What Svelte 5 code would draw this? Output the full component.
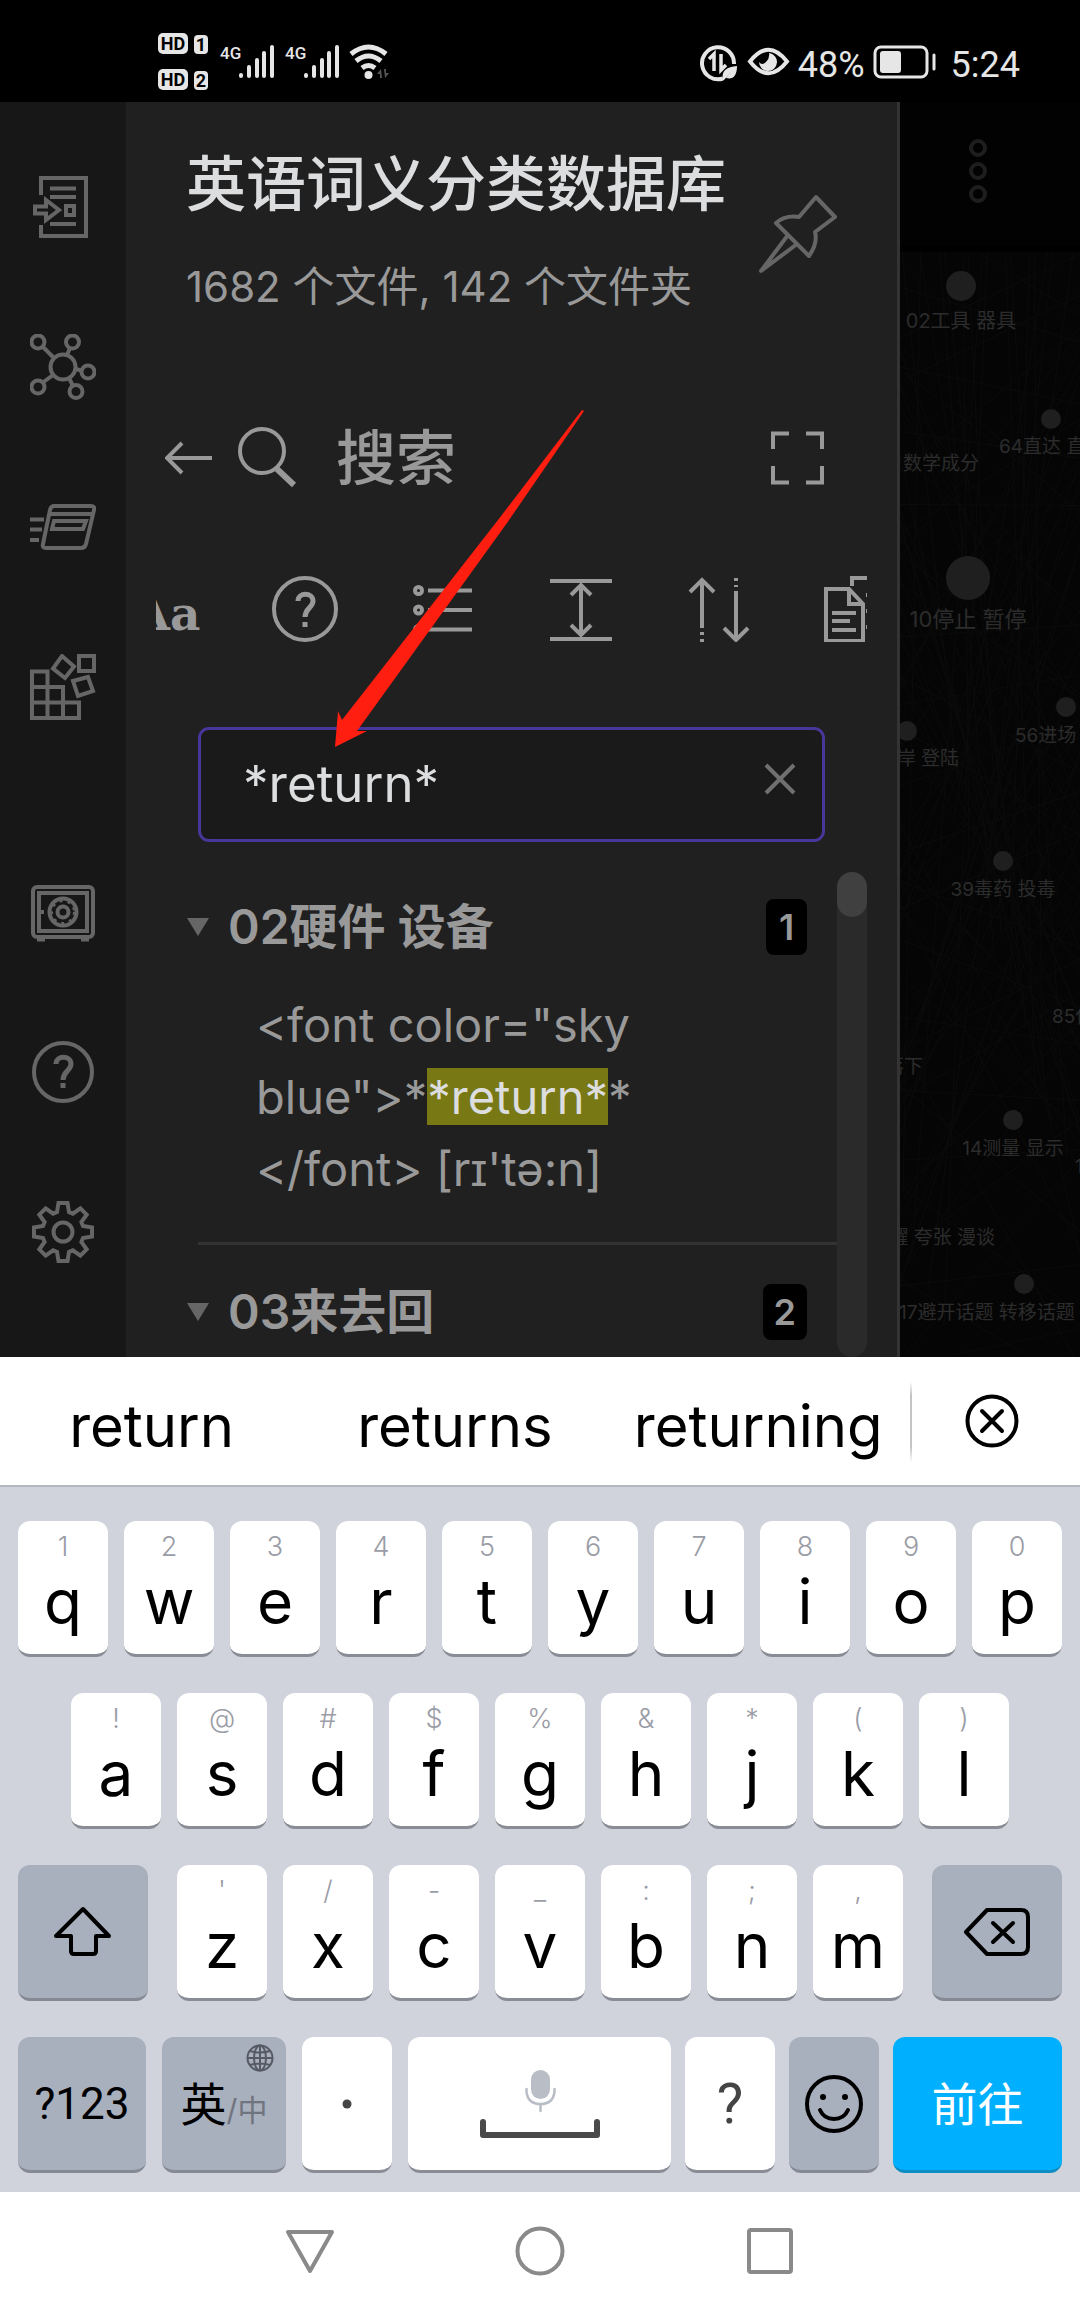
<script>
  let query = $state('*return*');

  const numberRow = [...'qwertyuiop'].map((letter, i) => ({ letter, hint: '1234567890'[i] }));
  const homeRow = [...'asdfghjkl'].map((letter, i) => ({ letter, hint: '!@#$%&*()'[i] }));
  const bottomRow = [...'zxcvbnm'].map((letter, i) => ({ letter, hint: "'/-_:;,"[i] }));
  const suggestions = ['return', 'returns', 'returning'];

  const nodes = [
    { x: 61, y: 184, r: 15 },
    { x: 151, y: 317, r: 10 },
    { x: 68, y: 476, r: 22 },
    { x: 7, y: 629, r: 10 },
    { x: 166, y: 605, r: 10 },
    { x: 103, y: 759, r: 10 },
    { x: 113, y: 1018, r: 10 },
    { x: 124, y: 1182, r: 10 }
  ];
  const labels = [
    { x: 61, y: 226, size: 20, text: '02工具 器具' },
    { x: 99, y: 351, size: 19, anchor: 'start', text: '64直达 直接' },
    { x: 79, y: 368, size: 19, anchor: 'end', text: '数学成分' },
    { x: 68, y: 525, size: 22, text: '10停止 暂停' },
    { x: 59, y: 663, size: 19, anchor: 'end', text: '上岸 登陆' },
    { x: 115, y: 640, size: 19, anchor: 'start', text: '56进场' },
    { x: 103, y: 794, size: 19, text: '39毒药 投毒' },
    { x: 152, y: 921, size: 19, anchor: 'start', text: '85什么' },
    { x: 23, y: 971, size: 19, anchor: 'end', text: '落下' },
    { x: 113, y: 1053, size: 19, text: '14测量 显示' },
    { x: 175, y: 1071, size: 19, anchor: 'start', text: '11' },
    { x: 95, y: 1142, size: 19, anchor: 'end', text: '炫耀 夸张 漫谈' },
    { x: -1, y: 1217, size: 19, anchor: 'start', text: '17避开话题 转移话题 支' }
  ];
  // Faint links between notes, spread over the canvas.
  const links = Array.from({ length: 90 }, (_, i) => ({
    x1: -20 - ((i * 37) % 90),
    y1: 90 + ((i * 211) % 1240),
    x2: 190 + ((i * 53) % 110),
    y2: 90 + ((i * 347 + 130) % 1240)
  })).concat(
    Array.from({ length: 16 }, (_, i) => ({
      x1: (i * 67) % 180,
      y1: 130,
      x2: (i * 41 + 60) % 180,
      y2: 700 + ((i * 131) % 560)
    }))
  );

  const gearPoints = Array.from({ length: 8 }, (_, k) => {
    const a = (k * Math.PI) / 4;
    return [[-6, -20], [-4.5, -29], [4.5, -29], [6, -20]]
      .map(([x, y]) => `${(x * Math.cos(a) - y * Math.sin(a)).toFixed(2)},${(x * Math.sin(a) + y * Math.cos(a)).toFixed(2)}`)
      .join(' ');
  }).join(' ');
</script>

{#snippet key(k)}
  <button class="key">
    <span class="hint">{k.hint}</span>
    <span class="letter">{k.letter}</span>
  </button>
{/snippet}

<div class="phone">
  <header class="status">
    <div class="status-group">
      <svg width="232" height="60" viewBox="157 32 232 60" aria-label="网络状态">
        <g fill="#e6e6e6">
          <rect x="158" y="33" width="30" height="21" rx="5" />
          <rect x="194" y="35" width="14" height="19" rx="4" />
          <rect x="158" y="69" width="30" height="21" rx="5" />
          <rect x="194" y="71" width="14" height="19" rx="4" />
        </g>
        <g class="badge-text">
          <text x="173" y="50">HD</text>
          <text x="201" y="51">1</text>
          <text x="173" y="86">HD</text>
          <text x="201" y="87">2</text>
        </g>
        <g class="net-text">
          <text x="220" y="59">4G</text>
          <text x="285" y="59">4G</text>
        </g>
        <g stroke="#e6e6e6" stroke-width="4" stroke-linecap="round">
          <path d="M241 75V76M249 67V76M257 60V76M264 53V76M272 47V76" />
          <path d="M306 75V76M314 67V76M322 60V76M329 53V76M337 47V76" />
        </g>
        <g fill="none" stroke="#e6e6e6" stroke-width="5">
          <path d="M351 54Q368.500 40 386 54" />
          <path d="M356 61Q368.500 51 381 61" />
          <path d="M362 68Q368.500 63 375 68" />
        </g>
        <circle cx="368.500" cy="75" r="4" fill="#e6e6e6" />
        <path d="M381 69L377 74H380V78H382ZM385 78L389 73H386V69H384Z" fill="#555" />
      </svg>
    </div>
    <div class="status-group right">
      <svg width="91" height="40" viewBox="700 42 91 40" aria-label="省电模式">
        <path d="M724 78.500A16 16 0 1 1 735 64" fill="none" stroke="#e6e6e6" stroke-width="4" />
        <path d="M710 59L715 54V71M722 54V70L727 65" fill="none" stroke="#e6e6e6" stroke-width="3.500" />
        <path d="M724 80C722 70 728 67 738 66C738 76 734 80 727 78L733 71L725 80Z" fill="#e6e6e6" />
        <path d="M751 61.500Q769.500 38 788 61.500Q769.500 85 751 61.500Z" fill="none" stroke="#e6e6e6" stroke-width="4" />
        <path d="M770 53A9 9 0 1 1 760 62Q763 66 767 62Q771 58 770 53Z" fill="#e6e6e6" />
      </svg>
      <span class="status-text">48%</span>
      <svg width="64" height="34" viewBox="874 46 64 34" aria-label="电量">
        <rect x="876" y="48" width="52" height="30" rx="6" fill="none" stroke="#e6e6e6" stroke-width="3" />
        <rect x="881" y="52" width="21" height="22" rx="3" fill="#e6e6e6" />
        <path d="M935 56V70" stroke="#e6e6e6" stroke-width="3" stroke-linecap="round" />
      </svg>
      <span class="status-text clock">5:24</span>
    </div>
  </header>

  <main class="workspace">
    <nav class="ribbon" aria-label="功能区">
      <button aria-label="快速切换">
        <svg viewBox="30 174 66 66">
          <path d="M41 195V178H86V236H41V225" />
          <path d="M50 188.500H76M50 197H76M50 224H76" />
          <path d="M66 206H74V215H66ZM35 206.500H46V200L59 210L46 220V213.500H35Z" />
        </svg>
      </button>
      <button aria-label="关系图谱">
        <svg viewBox="30 334 66 66">
          <circle cx="63" cy="367" r="12.500" />
          <circle cx="38" cy="342" r="6.500" /><circle cx="72.500" cy="342" r="6.500" />
          <circle cx="88" cy="372" r="6.500" /><circle cx="76" cy="391.500" r="6.500" />
          <circle cx="38" cy="387" r="6.500" />
          <path d="M43 347L54 358M70 348L67 355M76 369L81 370.500M69 378L73 386M53 375L43.500 382" />
        </svg>
      </button>
      <button aria-label="卡片">
        <svg viewBox="30 494 66 66">
          <path d="M54 506H91Q95 506 94 510L86 544Q85 548 81 548H46Q42 548 43 544L50 510Q51 506 54 506Z" />
          <path d="M49 514H93M54 521H86L83 529H52ZM30 519.500H44M30 529.500H42M30 540H39" />
        </svg>
      </button>
      <button aria-label="插件">
        <svg viewBox="30 653 66 66">
          <path d="M32 670.500H47.500V717H32ZM32 686H63V717H32M32 701.500H79V717H47M79 655H94V670H79Z" />
          <path d="M62 655L74 665.500L65 677L53 667.500ZM73 680L88 676L93 690L78 695Z" />
        </svg>
      </button>
      <button class="lower" aria-label="打开其他库">
        <svg viewBox="30 879 66 66">
          <rect x="33" y="887" width="60" height="50" rx="4" />
          <rect x="39" y="893" width="48" height="38" />
          <circle cx="63" cy="912" r="13.500" /><circle cx="63" cy="912" r="5.500" />
          <circle cx="63" cy="912" r="11" stroke-width="2" stroke-dasharray="3 5" />
          <path d="M37 939.500H45M81 939.500H89M42 910V914" />
        </svg>
      </button>
      <button aria-label="帮助">
        <svg viewBox="30 1039 66 66">
          <circle cx="63" cy="1072" r="29" />
          <path d="M56 1064C56 1055 71 1055 71 1064C71 1071 63 1071 63 1080" stroke-width="5" />
          <path d="M60.500 1083H65.500V1088H60.500Z" fill="#666" stroke="none" />
        </svg>
      </button>
      <button aria-label="设置">
        <svg viewBox="-33 -33 66 66">
          <polygon points={gearPoints} />
          <circle r="9.500" />
        </svg>
      </button>
    </nav>

    <section class="drawer">
      <div class="vault">
        <div>
          <h1>英语词义分类数据库</h1>
          <p>1682 个文件, 142 个文件夹</p>
        </div>
        <button class="pin" aria-label="固定">
          <svg viewBox="757 193 82 82">
            <path d="M816 197L835 217L815 232Q818 243 809 256L776 223Q785 215 799 217Z" />
            <path d="M788 235L761 271L797 244" />
          </svg>
        </button>
      </div>

      <div class="tab-row">
        <button aria-label="返回">
          <svg width="48" height="66" viewBox="165 425 48 66"><path d="M182 443L167 458L182 473M167 458H212" /></svg>
        </button>
        <svg class="loupe" width="66" height="66" viewBox="235 425 66 66">
          <circle cx="262" cy="451" r="22" /><path d="M277 469L294 485" stroke-width="6" />
        </svg>
        <h2>搜索</h2>
        <button class="expand" aria-label="展开">
          <svg width="54" height="66" viewBox="771 426 54 66">
            <path d="M774 450V434.500H790M807 434.500H823V450M823 467V483.500H807M790 483.500H774V467" />
          </svg>
        </button>
      </div>

      <div class="toolbar">
        <button class="case" aria-label="区分大小写">Aa</button>
        <button aria-label="解释搜索">
          <svg viewBox="272 575 66 66">
            <circle cx="305" cy="608" r="31" />
            <path d="M298 600C298 591 313 591 313 600C313 607 305 607 305 616" stroke-width="5" />
            <path d="M302.500 621H307.500V626H302.500Z" fill="#999" stroke="none" />
          </svg>
        </button>
        <button aria-label="折叠结果">
          <svg viewBox="410 575 66 66">
            <circle cx="418.500" cy="589.500" r="3.500" /><circle cx="418.500" cy="609" r="3.500" /><circle cx="418.500" cy="628.500" r="3.500" />
            <path d="M428 589.500H472M428 609H472M428 628.500H472" />
          </svg>
        </button>
        <button aria-label="显示更多上下文">
          <svg viewBox="548 575 66 66">
            <path d="M550 580H612M550 638H612M581 585V633M571 594L581 584L591 594M571 624L581 634L591 624" />
          </svg>
        </button>
        <button aria-label="排序">
          <svg viewBox="686 575 66 66">
            <path d="M702 580V627M690 591L702 579L714 591M736 590V637M724 627L736 639L748 627" />
            <path d="M702 631V634M702 638V641M736 577V580M736 584V586" />
          </svg>
        </button>
        <button aria-label="复制结果">
          <svg viewBox="824 575 66 66">
            <path d="M826 588H849L863 603V640H826ZM849 588V603H863M832 612H856M832 620H850M832 629H856" />
            <path d="M852 585V577H868" />
            <path d="M868 592V640" stroke-dasharray="4 12" />
          </svg>
        </button>
      </div>

      <div class="search-box">
        <input type="text" aria-label="搜索" bind:value={query} />
        <button aria-label="清除" onclick={() => (query = '')}>
          <svg width="32" height="32" viewBox="0 0 32 32"><path d="M2 2L30 30M30 2L2 30" /></svg>
        </button>
      </div>

      <div class="results">
        <div class="result-list">
          <article>
            <div class="result-head">
              <svg class="caret" width="24" height="20" viewBox="0 0 24 20"><path d="M1 1H23L12 19Z" /></svg>
              <h3>02硬件 设备</h3>
              <span class="count">1</span>
            </div>
            <p class="match">&lt;font color="sky<br />blue"&gt;*<mark>*return*</mark>*<br />&lt;/font&gt; [rɪ'tə:n]</p>
          </article>
          <article>
            <div class="result-head">
              <svg class="caret" width="24" height="20" viewBox="0 0 24 20"><path d="M1 1H23L12 19Z" /></svg>
              <h3>03来去回</h3>
              <span class="count">2</span>
            </div>
          </article>
        </div>
        <div class="scrollbar"><div class="thumb"></div></div>
      </div>
    </section>

    <aside class="canvas">
      <svg width="100%" height="1255" viewBox="0 0 180 1255" preserveAspectRatio="xMinYMin slice">
        <rect width="1000" height="144" fill="#020202" />
        <rect y="144" width="1000" height="6" fill="#000" />
        <g fill="none" stroke="#1e1e1e" stroke-width="4">
          <circle cx="78" cy="46" r="7" /><circle cx="78" cy="69" r="7" /><circle cx="78" cy="92" r="7" />
        </g>
        <clipPath id="graph-area"><rect y="150" width="1000" height="1200" /></clipPath>
        <g clip-path="url(#graph-area)">
          {#each links as l}
            <line x1={l.x1} y1={l.y1} x2={l.x2} y2={l.y2} stroke="#0b0b0b" />
          {/each}
          {#each nodes as n}
            <circle cx={n.x} cy={n.y} r={n.r} fill="#1f1f1f" />
          {/each}
          {#each labels as l}
            <text x={l.x} y={l.y} font-size={l.size} text-anchor={l.anchor ?? 'middle'} fill="#2c2c2c">{l.text}</text>
          {/each}
        </g>
      </svg>
    </aside>

    <svg class="pointer" width="252" height="340" viewBox="334 409 252 340" aria-hidden="true">
      <polygon points="582,410 498,520 342,720 338,711 335,747 367,731 357,731 507,523 584,411" fill="#ff1e10" />
    </svg>
  </main>

  <section class="keyboard" aria-label="键盘">
    <div class="candidates">
      {#each suggestions as word}
        <button class="word">{word}</button>
      {/each}
      <button class="dismiss" aria-label="关闭候选">
        <svg width="56" height="56" viewBox="-28 -28 56 56">
          <circle r="24.500" /><path d="M-10 -10L10 10M10 -10L-10 10" />
        </svg>
      </button>
    </div>
    <div class="rows">
      <div class="row">
        {#each numberRow as k}{@render key(k)}{/each}
      </div>
      <div class="row home">
        {#each homeRow as k}{@render key(k)}{/each}
      </div>
      <div class="row wide-gap">
        <button class="key dark side" aria-label="大写">
          <svg width="60" height="54" viewBox="54 1903 60 54"><path d="M84 1907L110 1934H97V1949Q97 1952 94 1952H75Q72 1952 72 1949V1934H57Z" /></svg>
        </button>
        <div class="letters">
          {#each bottomRow as k}{@render key(k)}{/each}
        </div>
        <button class="key dark side" aria-label="退格">
          <svg width="68" height="52" viewBox="964 1907 68 52">
            <path d="M988 1911H1022Q1029 1911 1029 1918V1948Q1029 1955 1022 1955H988L967 1933Z" />
            <path d="M994 1924L1014 1943M1014 1924L994 1943" />
          </svg>
        </button>
      </div>
      <div class="row narrow-gap">
        <div class="left-keys">
          <button class="key dark symbols">?123</button>
          <button class="key dark lang">
            <span class="zh">英</span><span class="alt">/中</span>
            <svg class="globe" width="28" height="28" viewBox="-14 -14 28 28">
              <circle r="12.500" /><ellipse rx="6" ry="12.500" /><path d="M0 -12V12M-12 0H12M-10 -7Q0 -4 10 -7M-10 7Q0 4 10 7" />
            </svg>
          </button>
          <button class="key one" aria-label="句点">
            <svg width="10" height="10" viewBox="0 0 10 10"><circle cx="5" cy="5" r="4.500" fill="#444" stroke="none" /></svg>
          </button>
          <button class="key space" aria-label="空格">
            <svg width="124" height="72" viewBox="478 2068 124 72">
              <rect x="531" y="2070" width="19" height="29" rx="9.500" fill="#b9bdc6" stroke="none" />
              <path d="M526.500 2089V2092Q528 2104 540.500 2104Q553 2104 554.500 2092V2089M540.500 2104V2111" stroke="#b9bdc6" stroke-width="2.500" />
              <path d="M483 2122V2135H597V2122" stroke="#4a4a4a" stroke-width="6" />
            </svg>
          </button>
        </div>
        <div class="right-keys">
          <button class="key one question">?</button>
          <button class="key dark one" aria-label="表情">
            <svg width="60" height="60" viewBox="-30 -30 60 60">
              <circle r="27" /><path d="M-14 6Q-10 15 0 15Q10 15 14 6" />
              <circle cx="-11" cy="-7" r="3" fill="#000" stroke="none" /><circle cx="11" cy="-7" r="3" fill="#000" stroke="none" />
            </svg>
          </button>
          <button class="key go">前往</button>
        </div>
      </div>
    </div>
  </section>

  <nav class="system" aria-label="系统导航">
    <button aria-label="返回"><svg width="52" height="52" viewBox="-26 -26 52 52"><path d="M-22 -19H22L0 20Z" /></svg></button>
    <button aria-label="主屏幕"><svg width="52" height="52" viewBox="-26 -26 52 52"><circle r="22.500" /></svg></button>
    <button aria-label="最近任务"><svg width="52" height="52" viewBox="-26 -26 52 52"><rect x="-21" y="-21" width="42" height="42" rx="2" /></svg></button>
  </nav>
</div>

<style>
  :global(body) {
    margin: 0;
    background: #000;
  }
  .phone {
    display: flex;
    flex-direction: column;
    height: 100vh;
    overflow: hidden;
    font-family: Inter, 'Noto Sans CJK SC', sans-serif;
  }
  button {
    margin: 0;
    padding: 0;
    border: 0;
    background: none;
    color: inherit;
    font: inherit;
  }
  svg {
    display: block;
    flex: none;
  }
  h1, h2, h3, p {
    margin: 0;
    font-weight: 400;
  }

  .status {
    display: flex;
    justify-content: space-between;
    height: 102px;
    padding: 0 60px 0 157px;
    box-sizing: border-box;
    background: #000;
    color: #e6e6e6;
    font-family: Roboto, sans-serif;
  }
  .status-group {
    display: flex;
    align-items: center;
    padding-top: 22px;
  }
  .right {
    gap: 8px;
  }
  .status-text {
    padding-top: 5px;
    font-size: 36px;
    line-height: 40px;
  }
  .clock {
    margin-left: 6px;
  }
  .badge-text {
    fill: #000;
    font-size: 18px;
    font-weight: 700;
    text-anchor: middle;
  }
  .net-text {
    fill: #e6e6e6;
    font-size: 17px;
    font-weight: 500;
  }

  .workspace {
    position: relative;
    display: flex;
    flex: 1;
    min-height: 0;
    overflow: hidden;
    background: #202020;
  }
  .ribbon {
    display: flex;
    flex-direction: column;
    align-items: center;
    gap: 94px;
    width: 126px;
    padding-top: 72px;
    background: #171717;
  }
  .ribbon svg {
    width: 66px;
    height: 66px;
    fill: none;
    stroke: #666;
    stroke-width: 4;
  }
  .ribbon .lower {
    margin-top: 65px;
  }

  .drawer {
    display: flex;
    flex: 1;
    flex-direction: column;
    min-width: 0;
    border-right: 3px solid #333;
    color: #999;
  }
  .drawer svg {
    fill: none;
    stroke: #999;
    stroke-width: 4;
  }
  .vault {
    display: flex;
    justify-content: space-between;
    padding: 40px 58px 0 60px;
  }
  .vault h1 {
    color: #dcddde;
    font-size: 60px;
    font-weight: 500;
    line-height: 84px;
  }
  .vault p {
    padding-top: 31px;
    font-size: 42px;
    line-height: 60px;
  }
  .pin {
    align-self: flex-start;
    padding-top: 51px;
  }
  .pin svg {
    width: 82px;
    height: 82px;
    stroke: #666;
    stroke-linejoin: round;
  }
  .tab-row {
    display: flex;
    align-items: center;
    height: 84px;
    padding: 99px 73px 0 39px;
  }
  .loupe {
    margin: 0 35px 0 22px;
  }
  .tab-row h2 {
    flex: 1;
    font-size: 60px;
    font-weight: 500;
    line-height: 84px;
  }
  .toolbar {
    display: flex;
    justify-content: center;
    gap: 72px;
    margin: 75px 30px 0;
    overflow: hidden;
  }
  .toolbar button {
    flex: none;
    width: 66px;
    height: 68px;
  }
  .toolbar svg {
    width: 66px;
    height: 66px;
  }
  .toolbar .case {
    font-family: 'DejaVu Serif', serif;
    font-size: 47px;
    font-weight: 700;
    line-height: 78px;
  }
  .search-box {
    display: flex;
    align-items: center;
    margin: 84px 72px 0;
    padding: 0 26px 0 42px;
    border: 3px solid #483699;
    border-radius: 11px;
    background: #1a1a1a;
  }
  .search-box input {
    flex: 1;
    min-width: 0;
    height: 109px;
    padding: 0 0 2px;
    border: 0;
    outline: 0;
    box-sizing: border-box;
    background: none;
    color: #dcddde;
    font: 51px Inter, sans-serif;
  }
  .search-box button {
    padding-bottom: 12px;
  }
  .drawer .search-box svg {
    stroke: #707070;
  }
  .results {
    display: flex;
    flex: 1;
    min-height: 0;
    margin: 30px 30px 0 60px;
  }
  .result-list {
    flex: 1;
    min-width: 0;
    overflow: hidden;
  }
  article {
    margin-left: 12px;
    padding-top: 17px;
  }
  article + article {
    border-top: 3px solid #333;
    padding-top: 29px;
  }
  .result-head {
    display: flex;
    align-items: center;
    gap: 18px;
    margin-left: -12px;
    padding: 10px 30px 0 0;
  }
  .drawer .caret {
    fill: #666;
    stroke: none;
  }
  .result-head h3 {
    flex: 1;
    font-size: 48px;
    font-weight: 600;
    line-height: 56px;
  }
  .count {
    min-width: 41px;
    padding: 0 11px;
    border-radius: 8px;
    box-sizing: border-box;
    background: #000;
    font-size: 36px;
    font-weight: 600;
    line-height: 56px;
    text-align: center;
  }
  .match {
    margin: 0 0 37px 58px;
    padding-top: 34px;
    font-size: 47px;
    line-height: 72px;
  }
  mark {
    background: #787814;
    color: #dcddde;
  }
  .scrollbar {
    width: 30px;
    border-radius: 15px;
    background: #2a2a2a;
  }
  .thumb {
    height: 45px;
    border-radius: 15px;
    background: #404040;
  }

  .canvas {
    width: 180px;
    overflow: hidden;
    background: #050505;
  }
  .pointer {
    position: absolute;
    top: 307px;
    left: 334px;
  }

  .candidates {
    display: flex;
    height: 128px;
    border-bottom: 2px solid #b4b7be;
    background: #fff;
    color: #000;
  }
  .word {
    flex: 303;
    min-width: 0;
    padding-top: 10px;
    font-size: 58px;
  }
  .dismiss {
    display: flex;
    flex: 160;
    align-items: center;
    justify-content: center;
    padding-right: 8px;
    border-left: 2px solid #d4d4d4;
    border-image: linear-gradient(transparent 20%, #c4c4c4 30%, #c4c4c4 70%, transparent 82%) 1;
  }
  .dismiss svg {
    fill: none;
    stroke: #000;
    stroke-width: 4;
    stroke-linecap: round;
  }
  .rows {
    display: flex;
    flex-direction: column;
    gap: 36px;
    padding: 34px 18px 19px;
    background: #d0d3dc;
  }
  .row, .letters, .left-keys, .right-keys {
    display: flex;
    gap: 16px;
  }
  .home {
    padding: 0 53px;
  }
  .wide-gap {
    gap: 29px;
  }
  .narrow-gap, .right-keys {
    gap: 14px;
  }
  .letters {
    flex: 726;
  }
  .left-keys {
    flex: 653;
  }
  .right-keys {
    flex: 377;
  }
  .key {
    position: relative;
    display: flex;
    flex: 90 1 0;
    flex-direction: column;
    align-items: center;
    height: 136px;
    min-width: 0;
    box-sizing: border-box;
    border-bottom: 3px solid #898c94;
    border-radius: 12px;
    background: #fff;
    color: #000;
  }
  .key svg {
    fill: none;
    stroke: #000;
    stroke-width: 4;
    stroke-linejoin: round;
    stroke-linecap: round;
  }
  .hint {
    padding-top: 10px;
    color: #9a9ca6;
    font-size: 27px;
    font-weight: 300;
    line-height: 32px;
  }
  .letter {
    font-size: 62px;
    line-height: 78px;
  }
  .dark {
    border-bottom-color: #848993;
    background: #a8afbd;
  }
  .side, .symbols, .one, .space, .go, .lang {
    flex-direction: row;
    justify-content: center;
  }
  .side {
    flex-grow: 130;
  }
  .symbols {
    flex-grow: 128;
    font: 44px Roboto, sans-serif;
  }
  .lang {
    flex-grow: 124;
    padding-bottom: 6px;
  }
  .zh {
    font-size: 46px;
  }
  .alt {
    padding-top: 14px;
    color: #70747e;
    font-size: 30px;
  }
  .key .globe {
    position: absolute;
    top: 7px;
    right: 12px;
    stroke: #555a64;
    stroke-width: 2;
  }
  .space {
    flex-grow: 263;
  }
  .question {
    color: #444;
    font: 56px Roboto, sans-serif;
  }
  .go {
    flex-grow: 169;
    padding-bottom: 6px;
    border-bottom-color: #0c8dc4;
    background: #00b0ff;
    color: #fff;
    font-size: 46px;
  }

  .system {
    display: flex;
    align-items: center;
    justify-content: center;
    gap: 178px;
    height: 118px;
    background: #fff;
  }
  .system svg {
    fill: none;
    stroke: #8a8a8a;
    stroke-width: 4;
    stroke-linejoin: round;
  }
</style>
